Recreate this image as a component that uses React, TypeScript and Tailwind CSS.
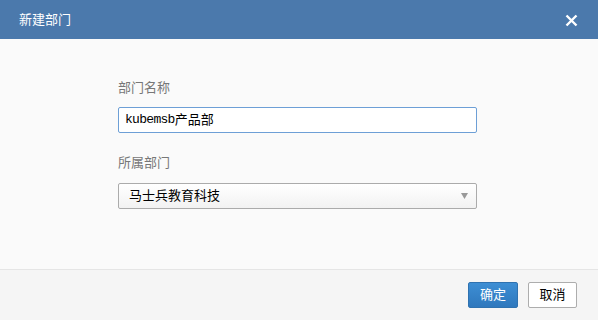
import React from "react";

const cjk = { fontFamily: '"Liberation Sans", "Noto Sans CJK SC", sans-serif' };

export default function App() {
  return (
    <div className="flex h-[320px] w-[598px] flex-col bg-[#fafafa]" style={cjk}>
      <div className="flex h-[39px] items-center justify-between bg-[#4b79ac] pl-[19px] pr-[20px]">
        <span className="text-[13px] text-white">新建部门</span>
        <svg width="13" height="13" viewBox="0 0 13 13" className="mt-[1px]">
          <path d="M1.5 1.5 L11.5 11.5 M11.5 1.5 L1.5 11.5" stroke="#fff" strokeWidth="2.4" />
        </svg>
      </div>
      <div className="flex flex-1 flex-col pl-[118px] pt-[41px]">
        <label className="text-[13px] leading-[16px] text-[#777]">部门名称</label>
        <div className="mt-[11px] flex h-[26px] w-[359px] items-center rounded-[2px] border border-[#6d9fd6] bg-white pl-[6px] text-[13px] text-black">
          <span style={{ fontFamily: '"Liberation Mono", "DejaVu Sans Mono", monospace', letterSpacing: "-0.7px" }}>kubemsb</span>
          <span>产品部</span>
        </div>
        <label className="mt-[22px] text-[13px] leading-[16px] text-[#777]">所属部门</label>
        <div className="mt-[12px] flex h-[26px] w-[359px] items-center justify-between rounded-[2px] border border-[#ababab] bg-gradient-to-b from-white to-[#f2f2f2] pl-[10px] pr-[8px] text-[13px] text-black">
          <span>马士兵教育科技</span>
          <svg width="7" height="6" viewBox="0 0 7 6">
            <path d="M0 0 L7 0 L3.5 6 Z" fill="#999" />
          </svg>
        </div>
      </div>
      <div className="flex h-[51px] items-center justify-end gap-[10px] border-t border-[#e5e5e5] bg-[#f5f5f5] pr-[21px]">
        <button className="h-[26px] w-[50px] rounded-[2px] border border-[#2f72b0] bg-gradient-to-b from-[#3d8ed4] to-[#2f78bd] text-[13px] text-white">确定</button>
        <button className="h-[26px] w-[49px] rounded-[2px] border border-[#adadad] bg-white text-[13px] text-black">取消</button>
      </div>
    </div>
  );
}
